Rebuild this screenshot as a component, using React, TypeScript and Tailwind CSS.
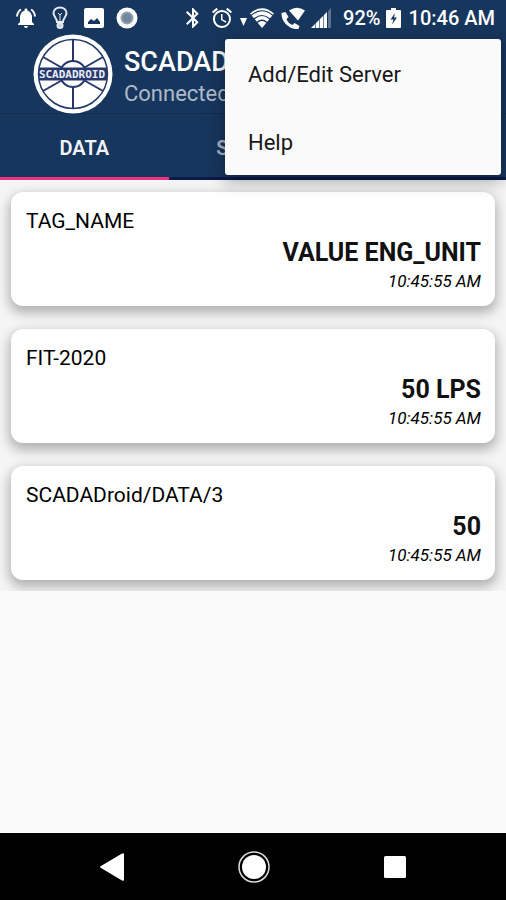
import { ReactNode } from "react";
import { MdAlarm, MdBluetooth, MdNotificationsActive } from "react-icons/md";

const readings = [
  { tag: "TAG_NAME", value: "VALUE ENG_UNIT", time: "10:45:55 AM" },
  { tag: "FIT-2020", value: "50 LPS", time: "10:45:55 AM" },
  { tag: "SCADADroid/DATA/3", value: "50", time: "10:45:55 AM" },
];

function StatusBar() {
  return (
    <div className="flex h-[34px] items-center justify-between pt-px pl-[14px] pr-[11px] text-white">
      <div className="flex items-center">
        <MdNotificationsActive size={24} />
        <svg width="16" height="24" viewBox="0 0 16 24" className="ml-[14px]" fill="none" stroke="#e4e9ef" strokeWidth="2">
          <path d="M5 16c0-4-3.500-5-3.500-9a6.500 5.500 0 0 1 13 0c0 4-3.500 5-3.500 9z" />
          <path d="M6 7l2 2 2-2M8 9v7" strokeWidth="1" />
          <circle cx="8" cy="19.500" r="2.500" fill="#c4ccd6" />
        </svg>
        <svg width="20" height="20" viewBox="0 0 20 20" className="ml-4">
          <rect width="20" height="20" rx="2" fill="#fff" />
          <path d="M4 16v-2l3-3 3 2 3-3 3 4v2z" fill="#17365d" />
        </svg>
        <svg width="22" height="22" viewBox="0 0 22 22" className="ml-3">
          <circle cx="11" cy="11" r="10.500" fill="#fff" />
          <circle cx="11" cy="11" r="6.500" fill="#8fa0b2" />
          <circle cx="11" cy="11" r="4.500" fill="#72869c" />
        </svg>
      </div>
      <div className="flex items-center">
        <MdBluetooth size={24} />
        <MdAlarm size={24} className="ml-[5px]" />
        <svg width="7" height="8" viewBox="0 0 7 8" className="mt-2 ml-[6px]" fill="currentColor">
          <path d="M0 0h7L3.500 8z" />
        </svg>
        <svg width="26" height="21" viewBox="0 0 26 21" className="ml-[2px]">
          <path d="M1 6.500Q13-4 25 6.500L13 21z" fill="#fff" />
          <path d="M2 8.500Q13-1 24 8.500M5 12Q13 5 21 12M8 15.500Q13 11 18 15.500" fill="none" stroke="#17365d" strokeWidth="1.200" />
        </svg>
        <svg width="24" height="22" viewBox="0 0 24 22" className="ml-[6px]" fill="currentColor">
          <path d="M8 3.500Q16-2 24 3.500L17 13.500z" />
          <path d="M0.500 6l4-1 3 5-2 2c1 3 3 5 6 6l2-2 5 3-1 3C9 23 0 15 .5 6z" />
        </svg>
        <svg width="20" height="20" viewBox="0 0 20 20" className="ml-[6px]" fill="currentColor">
          <path d="M0 20L16 4v16z" />
          <path d="M17 3l3-3v20h-3z" opacity=".3" />
          <path d="M4.500 14v6M8.500 10v10M12.500 6v14" stroke="#17365d" strokeWidth="1" opacity=".6" />
        </svg>
        <span className="ml-3 text-xl font-medium">92%</span>
        <svg width="15" height="20" viewBox="0 0 15 20" className="ml-[5px]">
          <path d="M0 3q0-1 1-1h4V0h5v2h4q1 0 1 1v16q0 1-1 1H1q-1 0-1-1z" fill="#fff" />
          <path d="M9 5L4.500 11.500H7.500L6 16.500l5-7H8z" fill="#17365d" />
        </svg>
        <span className="ml-2 text-xl font-medium">10:46 AM</span>
      </div>
    </div>
  );
}

function Logo() {
  return (
    <svg width="80" height="80" viewBox="0 0 80 80" role="img" aria-label="SCADADroid" className="shrink-0">
      <circle cx="40" cy="40" r="39.500" fill="#fff" />
      <circle cx="40" cy="40" r="34.500" fill="none" stroke="#243b68" strokeWidth="1.500" />
      <path d="M40 5.500v69M10 23l60 34M10 57l60-34" stroke="#26376b" strokeWidth="2" />
      <circle cx="40" cy="40" r="13" fill="#fff" stroke="#26376b" strokeWidth="2" />
      <path d="M6 33.500h68v13H6z" fill="#26376b" />
      <text
        x="39"
        y="44"
        textAnchor="middle"
        fontSize="11"
        fontWeight="700"
        fill="#e9ecf4"
        fontFamily="'DejaVu Sans Mono', monospace"
      >
        SCADADROID
      </text>
    </svg>
  );
}

function Tab({ active = false, children }: { active?: boolean; children: ReactNode }) {
  return (
    <button
      type="button"
      role="tab"
      aria-selected={active}
      className={
        active
          ? "flex-1 border-b-[3px] border-[#f0337f] pt-1 text-xl font-semibold text-[#f1f3f6]"
          : "flex-1 border-b-[3px] border-[#0b1a4c] pt-1 text-xl font-semibold text-[#a9b5c6]"
      }
    >
      {children}
    </button>
  );
}

function NavBar() {
  return (
    <nav className="flex h-[67px] items-center justify-around bg-black px-[43px]">
      <button type="button" aria-label="Back">
        <svg width="24" height="28" viewBox="0 0 24 28" fill="#fff">
          <path d="M1 13L22 .5q2-1 2 1v25q0 2-2 1L1 15q-2-1 0-2z" />
        </svg>
      </button>
      <button type="button" aria-label="Home">
        <svg width="32" height="32" viewBox="0 0 32 32">
          <circle cx="16" cy="16" r="15" fill="none" stroke="#ddd" strokeWidth="1.500" />
          <circle cx="16" cy="16" r="12" fill="#fff" />
        </svg>
      </button>
      <button type="button" aria-label="Recent apps">
        <svg width="22" height="22" viewBox="0 0 22 22">
          <rect width="22" height="22" rx="1.500" fill="#fff" />
        </svg>
      </button>
    </nav>
  );
}

export default function App() {
  return (
    <div className="relative flex min-h-screen flex-col bg-[#fafafa] font-[Roboto,sans-serif]">
      <header className="bg-[#17365d]">
        <StatusBar />
        <div className="flex h-20 items-center gap-[11px] border-b border-[#122c50] pl-[33px]">
          <Logo />
          <div className="pt-2">
            <h1 className="text-[27px] leading-8 font-medium text-white">SCADADroid</h1>
            <p className="text-[22px] leading-8 text-[#aebaca]">Connected</p>
          </div>
        </div>
        <div role="tablist" className="flex h-[66px]">
          <Tab active>DATA</Tab>
          <Tab>STATUS</Tab>
          <Tab>INFO</Tab>
        </div>
      </header>

      <main className="flex-1">
        <ul className="flex flex-col gap-[23px] overflow-hidden bg-[#f5f5f5] px-[11px] pt-3 pb-[11px]">
          {readings.map((r) => (
            <li
              key={r.tag}
              className="flex h-[114px] flex-col rounded-xl bg-white pt-[13px] pr-[14px] pl-[15px] text-black shadow-[0_5px_12px_2px_rgba(0,0,0,0.28)]"
            >
              <span className="text-[21px] leading-8">{r.tag}</span>
              <span className="text-right text-[25px] leading-8 font-bold text-[#111]">{r.value}</span>
              <time className="text-right text-[17px] leading-6 italic">{r.time}</time>
            </li>
          ))}
        </ul>
      </main>

      <NavBar />

      <div
        role="menu"
        className="absolute top-[39px] right-[5px] flex w-[276px] flex-col rounded-[3px] bg-[#fafafa] text-[22px] text-[#181818] shadow-[0_5px_16px_2px_rgba(0,0,0,0.3)]"
      >
        <button type="button" role="menuitem" className="h-[68px] px-[23px] pt-[2px] text-left">
          Add/Edit Server
        </button>
        <button type="button" role="menuitem" className="h-[68px] px-[23px] pt-[2px] text-left">
          Help
        </button>
      </div>
    </div>
  );
}
